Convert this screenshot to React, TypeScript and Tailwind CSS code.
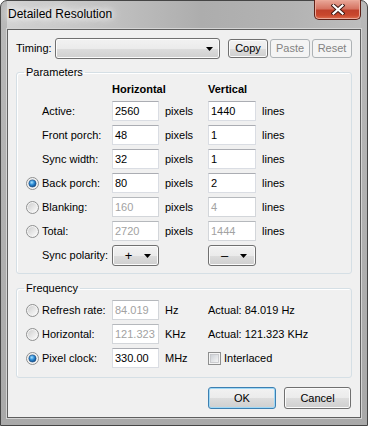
import React from "react";

const BTN =
  "rounded-[3px] border border-[#707070] bg-[linear-gradient(#f2f2f2_0%,#ebebeb_50%,#dddddd_50%,#cfcfcf_100%)] shadow-[inset_0_0_0_1px_#fbfbfb]";
const BTN_OFF =
  "rounded-[3px] border border-[#adb2b5] bg-[#f4f4f4] text-[#838383]";

function Radio({ checked }: { checked?: boolean }) {
  return (
    <svg width="13" height="13" viewBox="0 0 13 13" className="shrink-0">
      <defs>
        <linearGradient id="rfill" x1="0" y1="0" x2="1" y2="1">
          <stop offset="0" stopColor="#cfcfcf" />
          <stop offset="1" stopColor="#fbfbfb" />
        </linearGradient>
        <radialGradient id="rdot" cx="0.4" cy="0.35" r="0.75">
          <stop offset="0" stopColor="#a8e2ff" />
          <stop offset="0.45" stopColor="#2b8bd6" />
          <stop offset="1" stopColor="#0a3a72" />
        </radialGradient>
      </defs>
      <circle cx="6.5" cy="6.5" r="6" fill="#f4f4f4" stroke="#8e8f8f" />
      <circle cx="6.5" cy="6.5" r="4.5" fill="url(#rfill)" />
      {checked && <circle cx="6.5" cy="6.5" r="3.6" fill="url(#rdot)" stroke="#1b4f86" strokeWidth="0.6" />}
    </svg>
  );
}

function Checkbox() {
  return (
    <svg width="13" height="13" viewBox="0 0 13 13" className="shrink-0">
      <defs>
        <linearGradient id="cfill" x1="0" y1="0" x2="1" y2="1">
          <stop offset="0" stopColor="#cbcfd5" />
          <stop offset="1" stopColor="#f7f7f7" />
        </linearGradient>
      </defs>
      <rect x="0.5" y="0.5" width="12" height="12" fill="#f4f4f4" stroke="#8e8f8f" />
      <rect x="2.5" y="2.5" width="8" height="8" fill="url(#cfill)" stroke="#c2c4c8" strokeWidth="0.8" />
    </svg>
  );
}

function Arrow() {
  return (
    <svg width="7" height="4" viewBox="0 0 7 4" className="shrink-0">
      <path d="M0 0h7L3.5 4z" fill="#000" />
    </svg>
  );
}

function Field({ value, w, disabled }: { value: string; w: string; disabled?: boolean }) {
  return (
    <div
      className={`${w} h-[20px] shrink-0 border bg-white pl-[2px] leading-[18px] ${
        disabled
          ? "border-[#d3d6da] border-t-[#b5b8bc] text-[#a2a2a2]"
          : "border-[#dadde3] border-t-[#abadb3] text-black"
      }`}
    >
      {value}
    </div>
  );
}

function Label({ text, radio, checked }: { text: string; radio?: boolean; checked?: boolean }) {
  return (
    <div className="flex w-[86px] shrink-0 items-center">
      {radio ? <Radio checked={checked} /> : <span className="w-[13px] shrink-0" />}
      <span className="ml-[3px] whitespace-nowrap">{text}</span>
    </div>
  );
}

function ParamRow(props: {
  label: string;
  h: string;
  v: string;
  radio?: boolean;
  checked?: boolean;
  disabled?: boolean;
}) {
  return (
    <div className="flex h-[20px] items-center">
      <Label text={props.label} radio={props.radio} checked={props.checked} />
      <Field value={props.h} w="w-[47px]" disabled={props.disabled} />
      <span className="ml-[6px] w-[43px] shrink-0">pixels</span>
      <Field value={props.v} w="w-[48px]" disabled={props.disabled} />
      <span className="ml-[6px]">lines</span>
    </div>
  );
}

function Polarity({ sign, w }: { sign: string; w: string }) {
  return (
    <div className={`${BTN} ${w} flex h-[21px] shrink-0 items-center`}>
      <span className="w-[31px] text-center text-[13px] leading-[13px]">{sign}</span>
      <Arrow />
    </div>
  );
}

function FreqRow(props: {
  label: string;
  value: string;
  unit: string;
  checked?: boolean;
  disabled?: boolean;
  children: React.ReactNode;
}) {
  return (
    <div className="flex h-[20px] items-center">
      <Label text={props.label} radio checked={props.checked} />
      <Field value={props.value} w="w-[47px]" disabled={props.disabled} />
      <span className="ml-[6px] w-[43px] shrink-0">{props.unit}</span>
      {props.children}
    </div>
  );
}

export default function App() {
  return (
    <div className="flex h-[426px] w-[368px] flex-col rounded-t-[7px] border border-[#454545] bg-[linear-gradient(180deg,#b9b9b9_0%,#a9a9a9_100%)] px-[6px] pb-[7px] font-['Liberation_Sans',Arial,sans-serif] text-[11px] leading-[13px] text-black">
      <div className="flex h-[28px] items-start justify-between bg-[linear-gradient(90deg,#d2d2d2_0%,#c4c4c4_25%,#adadad_55%,#b3b3b3_80%,#bdbdbd_100%)]">
        <span className="pl-[1px] pt-[6px] text-[12px] leading-[14px] [text-shadow:0_0_6px_#fff,0_0_10px_#fff,0_0_14px_#fff]">
          Detailed Resolution
        </span>
        <div className="-mt-[1px] flex h-[20px] w-[47px] items-center justify-center rounded-b-[5px] border border-t-0 border-[#5e2017] bg-[linear-gradient(#e9a899_0%,#d67563_45%,#c0412b_55%,#c9472d_80%,#dd6e50_100%)] shadow-[inset_0_0_0_1px_#eba898]">
          <svg width="14" height="11" viewBox="0 0 14 11">
            <path d="M2.5 1.5l9 8M11.5 1.5l-9 8" stroke="#3b1611" strokeWidth="4" strokeLinecap="square" />
            <path d="M2.5 1.5l9 8M11.5 1.5l-9 8" stroke="#fff" strokeWidth="2.2" strokeLinecap="square" />
          </svg>
        </div>
      </div>

      <div className="flex flex-1 flex-col border border-[#5f5f5f] bg-[#f0f0f0] px-[8px] pt-[8px] shadow-[0_0_0_1px_#d4d4d4]">
        <div className="flex h-[21px] items-center">
          <span className="w-[39px] shrink-0">Timing:</span>
          <div className={`${BTN} flex h-[21px] w-[165px] shrink-0 items-center justify-end pr-[6px]`}>
            <Arrow />
          </div>
          <div className={`${BTN} ml-[8px] flex h-[19px] w-[40px] items-center justify-center`}>Copy</div>
          <div className={`${BTN_OFF} ml-[2px] flex h-[19px] w-[40px] items-center justify-center`}>Paste</div>
          <div className={`${BTN_OFF} ml-[2px] flex h-[19px] w-[40px] items-center justify-center`}>Reset</div>
        </div>

        <fieldset className="mt-[7px] rounded-[3px] border border-[#d5dfe5] pb-[7px] pl-[9px] pt-[2px] shadow-[inset_1px_1px_0_#fff]">
          <legend className="-ml-[2px] px-[2px] leading-[13px]">Parameters</legend>
          <div className="flex h-[16px] items-center font-bold">
            <span className="w-[86px] shrink-0" />
            <span className="w-[96px] shrink-0">Horizontal</span>
            <span>Vertical</span>
          </div>
          <div className="mt-[4px] flex flex-col gap-[4px]">
            <ParamRow label="Active:" h="2560" v="1440" />
            <ParamRow label="Front porch:" h="48" v="1" />
            <ParamRow label="Sync width:" h="32" v="1" />
            <ParamRow label="Back porch:" h="80" v="2" radio checked />
            <ParamRow label="Blanking:" h="160" v="4" radio disabled />
            <ParamRow label="Total:" h="2720" v="1444" radio disabled />
            <div className="flex h-[21px] items-center">
              <Label text="Sync polarity:" />
              <Polarity sign="+" w="w-[47px]" />
              <span className="w-[49px] shrink-0" />
              <Polarity sign="–" w="w-[48px]" />
            </div>
          </div>
        </fieldset>

        <fieldset className="mt-[8px] rounded-[3px] border border-[#d5dfe5] pb-[9px] pl-[9px] pt-[5px] shadow-[inset_1px_1px_0_#fff]">
          <legend className="-ml-[2px] px-[2px] leading-[13px]">Frequency</legend>
          <div className="flex flex-col gap-[4px]">
            <FreqRow label="Refresh rate:" value="84.019" unit="Hz" disabled>
              <span>Actual: 84.019 Hz</span>
            </FreqRow>
            <FreqRow label="Horizontal:" value="121.323" unit="KHz" disabled>
              <span>Actual: 121.323 KHz</span>
            </FreqRow>
            <FreqRow label="Pixel clock:" value="330.00" unit="MHz" checked>
              <div className="flex items-center">
                <Checkbox />
                <span className="ml-[3px]">Interlaced</span>
              </div>
            </FreqRow>
          </div>
        </fieldset>

        <div className="mt-[9px] flex">
          <div className="ml-[192px] flex h-[22px] w-[68px] items-center justify-center rounded-[3px] border border-[#3c7fb1] bg-[linear-gradient(#f2f2f2_0%,#ebebeb_50%,#dddddd_50%,#cfcfcf_100%)] shadow-[inset_0_0_0_1px_#9fd8f6]">
            OK
          </div>
          <div className={`${BTN} ml-[8px] flex h-[22px] w-[67px] items-center justify-center`}>Cancel</div>
        </div>
      </div>
    </div>
  );
}
